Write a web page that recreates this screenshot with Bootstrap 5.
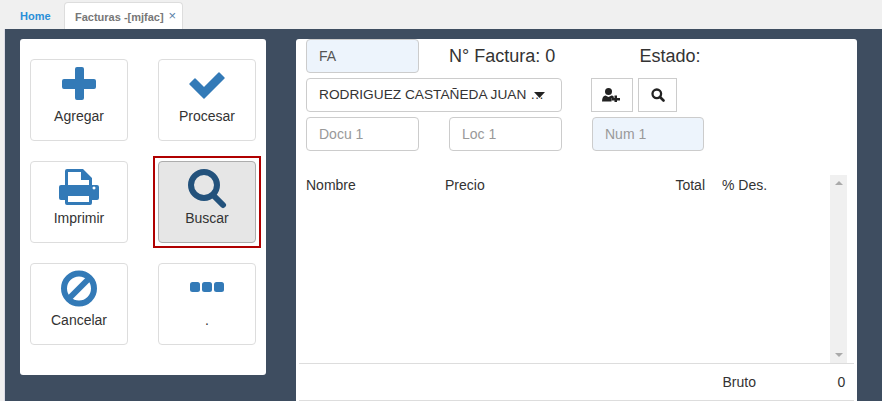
<!DOCTYPE html>
<html lang="en">
<head>
  <meta charset="UTF-8">
  <meta name="viewport" content="width=device-width, initial-scale=1.0">
  <title>Facturas</title>
  <link href="https://cdn.jsdelivr.net/npm/bootstrap@5.3.0/dist/css/bootstrap.min.css" rel="stylesheet">
  <style>
    html, body { height: 100%; overflow: hidden; }
    body { font-family: "Liberation Sans", Arial, sans-serif; font-size: 14px; color: #333; background: #fff; }
    .tab-strip { height: 29px; background: #f0f0f0; padding-left: 5px; }
    .tab-home, .tab-open { font-size: 11px; font-weight: 700; line-height: 14px; }
    .tab-home { color: #2a8fd8; padding: 9px 15px 0; width: 59px; }
    .tab-open { color: #777; background: #fff; border: 1px solid #ddd; border-bottom: 0; border-radius: 4px 4px 0 0; margin-top: 2px; padding: 7px 6px 0 10px; width: 119px; }
    .tab-close { color: #5a7fa8; font-size: 13px; font-weight: 400; line-height: 12px; }
    .page-area { height: 372px; }
    .edge-strip { width: 5px; background: #f0f0f0; border-right: 1px solid #dcdce6; }
    .work-area { background: #3e4d60; padding: 10px 25px 0 15px; gap: 30px; }
    .tool-card { width: 246px; height: 336px; background: #fff; border-radius: 3px; padding: 20px 10px; display: grid; grid-template-columns: 98px 98px; column-gap: 30px; row-gap: 20px; grid-auto-rows: 82px; }
    .tool-btn { position: relative; border: 1px solid #ddd; border-radius: 4px; background: #fff; color: #333; padding: 3px 0 0; font-size: 14px; line-height: 20px; display: flex; flex-direction: column; align-items: center; }
    .tool-btn svg { display: block; margin-bottom: -1px; }
    .tool-btn.is-focus { background: #e6e6e6; border-color: #adadad; }
    .tool-btn.is-focus::after { content: ''; position: absolute; top: -6px; right: -6px; bottom: -6px; left: -6px; border: 2px solid #b00000; }
    .invoice-card { width: 561px; height: 372px; background: #fff; border-radius: 3px 3px 0 0; padding: 0 10px; }
    .field-box { height: 34px; border: 1px solid #ccc; border-radius: 4px; font-size: 14px; color: #555; padding: 6px 12px; line-height: 20px; box-shadow: none; }
    .field-box::placeholder { color: #999; }
    .field-tint { background: #edf4fc; }
    .field-fa { width: 113px; }
    .row-head { height: 34px; }
    .head-num { font-size: 18px; line-height: 34px; margin-left: 30px; width: 190.5px; }
    .head-state { font-size: 18px; line-height: 34px; }
    .row-client { margin-top: 5px; }
    .client-select { width: 256px; height: 34px; border: 1px solid #ccc; border-radius: 4px; font-size: 13.7px; color: #333; padding: 6px 10px 6px 12px; background-color: #fff; background-image: url("data:image/svg+xml,%3Csvg xmlns='http://www.w3.org/2000/svg' width='11' height='6'%3E%3Cpath d='M0 0h11L5.500 6z' fill='%23222'/%3E%3C/svg%3E"); background-position: 227px 13px; background-size: 11px 6px; background-repeat: no-repeat; appearance: none; text-overflow: ellipsis; white-space: nowrap; overflow: hidden; }
    .square-btn { height: 34px; background: #fff; border: 1px solid #ccc; display: flex; align-items: center; justify-content: center; padding: 0; }
    .square-one { width: 42px; margin-left: 29px; padding-right: 2px; }
    .square-two { width: 39px; margin-left: 5px; }
    .row-docs { margin-top: 5px; }
    .field-docu { width: 113px; }
    .field-loc { width: 113px; margin-left: 30px; }
    .field-num { width: 112px; margin-left: 30px; }
    .lines-zone { height: 212px; }
    .lines-table { flex: 1; padding-top: 24px; line-height: 20px; }
    .col-name { width: 139px; }
    .col-price { width: 229px; }
    .col-total { width: 31px; text-align: right; }
    .col-disc { margin-left: 17px; }
    .scroll-rail { width: 17px; height: 188px; background: #f0f0f0; margin-top: 24px; padding: 6px 0; }
    .scroll-up { border-left: 4px solid transparent; border-right: 4px solid transparent; border-bottom: 4px solid #aaa; }
    .scroll-down { border-left: 4px solid transparent; border-right: 4px solid transparent; border-top: 4px solid #aaa; }
    .totals-row { margin-left: -7px; margin-right: -7px; border-top: 1px solid #ddd; border-bottom: 1px solid #ddd; height: 38px; line-height: 36px; }
    .totals-label { margin-left: 423.5px; width: 115px; }
  </style>
</head>
<body>

<div class="tab-strip d-flex">
  <div class="tab-home">Home</div>
  <div class="tab-open d-flex justify-content-between">
    <span>Facturas -[mjfac]</span>
    <span class="tab-close">&times;</span>
  </div>
</div>

<div class="page-area d-flex">
  <div class="edge-strip"></div>
  <div class="work-area d-flex flex-grow-1">

    <div class="tool-card">
      <button type="button" class="tool-btn">
        <svg width="44" height="44" viewBox="0 0 44 44" fill="#337ab7">
          <path d="M20 4h5a2 2 0 0 1 2 2v10h10a2 2 0 0 1 2 2v6a2 2 0 0 1-2 2H27v9a2 2 0 0 1-2 2h-5a2 2 0 0 1-2-2v-9H7a2 2 0 0 1-2-2v-6a2 2 0 0 1 2-2h11V6a2 2 0 0 1 2-2z"/>
        </svg>
        Agregar
      </button>
      <button type="button" class="tool-btn">
        <svg width="44" height="44" viewBox="0 0 44 44" fill="#337ab7" stroke="#337ab7" stroke-width="1.500" stroke-linejoin="round">
          <path d="M5 21l5-5 9 9 15-15 5 5-20 20z"/>
        </svg>
        Procesar
      </button>
      <button type="button" class="tool-btn">
        <svg width="44" height="44" viewBox="0 0 44 44" fill="#337ab7">
          <path fill-rule="evenodd" d="M10 4h16l9 9v7h5a2 2 0 0 1 2 2v11a2 2 0 0 1-2 2h-5v3a2 2 0 0 1-2 2H10a2 2 0 0 1-2-2v-3H4a2 2 0 0 1-2-2V22a2 2 0 0 1 2-2h4V6a2 2 0 0 1 2-2zM11 7v13h21v-5h-8V7zM11 31v6h21v-6zM37 21.500a1.500 1.500 0 1 0 .01 0z"/>
        </svg>
        Imprimir
      </button>
      <button type="button" class="tool-btn is-focus">
        <svg width="44" height="44" viewBox="0 0 44 44" fill="none" stroke="#23527c">
          <circle cx="19" cy="20" r="13" stroke-width="6"/>
          <path d="M29 31l9 9" stroke-width="6" stroke-linecap="round"/>
        </svg>
        Buscar
      </button>
      <button type="button" class="tool-btn">
        <svg width="44" height="44" viewBox="0 0 44 44" fill="none" stroke="#337ab7" stroke-width="6">
          <circle cx="22" cy="21.500" r="15"/>
          <path d="M11 32.500l22-22"/>
        </svg>
        Cancelar
      </button>
      <button type="button" class="tool-btn">
        <svg width="44" height="44" viewBox="0 0 44 44" fill="#337ab7">
          <rect x="5" y="15" width="10" height="10" rx="2.500"/>
          <rect x="17" y="15" width="10" height="10" rx="2.500"/>
          <rect x="29" y="15" width="10" height="10" rx="2.500"/>
        </svg>
        .
      </button>
    </div>

    <div class="invoice-card d-flex flex-column">
      <div class="row-head d-flex">
        <input class="field-box field-tint field-fa" type="text" value="FA">
        <div class="head-num">N° Factura: 0</div>
        <div class="head-state">Estado:</div>
      </div>
      <div class="row-client d-flex">
        <select class="client-select">
          <option>RODRIGUEZ CASTAÑEDA JUAN CARLOS</option>
        </select>
        <button type="button" class="square-btn square-one" aria-label="Nuevo cliente">
          <svg width="18" height="14" viewBox="0 0 18 14" fill="#222">
            <circle cx="6.500" cy="3.500" r="3.500"/>
            <path d="M0 13.500c0-4 1.500-6 3.500-6L6.500 9l3-1.500c1 0 1.800.4 2.300 1.200V10H9.500v3.500z"/>
            <path d="M12.500 7.500h2.500V10h3v2.500h-3V15h-2.500v-2.500h-3V10h3z"/>
          </svg>
        </button>
        <button type="button" class="square-btn square-two" aria-label="Buscar cliente">
          <svg width="14" height="14" viewBox="0 0 14 14" fill="none" stroke="#222">
            <circle cx="5.800" cy="5.800" r="4.300" stroke-width="2.300"/>
            <path d="M9 9l3.500 3.500" stroke-width="2.600" stroke-linecap="round"/>
          </svg>
        </button>
      </div>
      <div class="row-docs d-flex">
        <input class="field-box field-docu" type="text" placeholder="Docu 1">
        <input class="field-box field-loc" type="text" placeholder="Loc 1">
        <input class="field-box field-tint field-num" type="text" placeholder="Num 1">
      </div>
      <div class="lines-zone d-flex">
        <div class="lines-table d-flex align-items-start">
          <div class="col-name">Nombre</div>
          <div class="col-price">Precio</div>
          <div class="col-total">Total</div>
          <div class="col-disc">% Des.</div>
        </div>
        <div class="scroll-rail d-flex flex-column justify-content-between align-items-center">
          <div class="scroll-up"></div>
          <div class="scroll-down"></div>
        </div>
      </div>
      <div class="totals-row d-flex">
        <div class="totals-label">Bruto</div>
        <div>0</div>
      </div>
    </div>

  </div>
</div>

</body>
</html>
